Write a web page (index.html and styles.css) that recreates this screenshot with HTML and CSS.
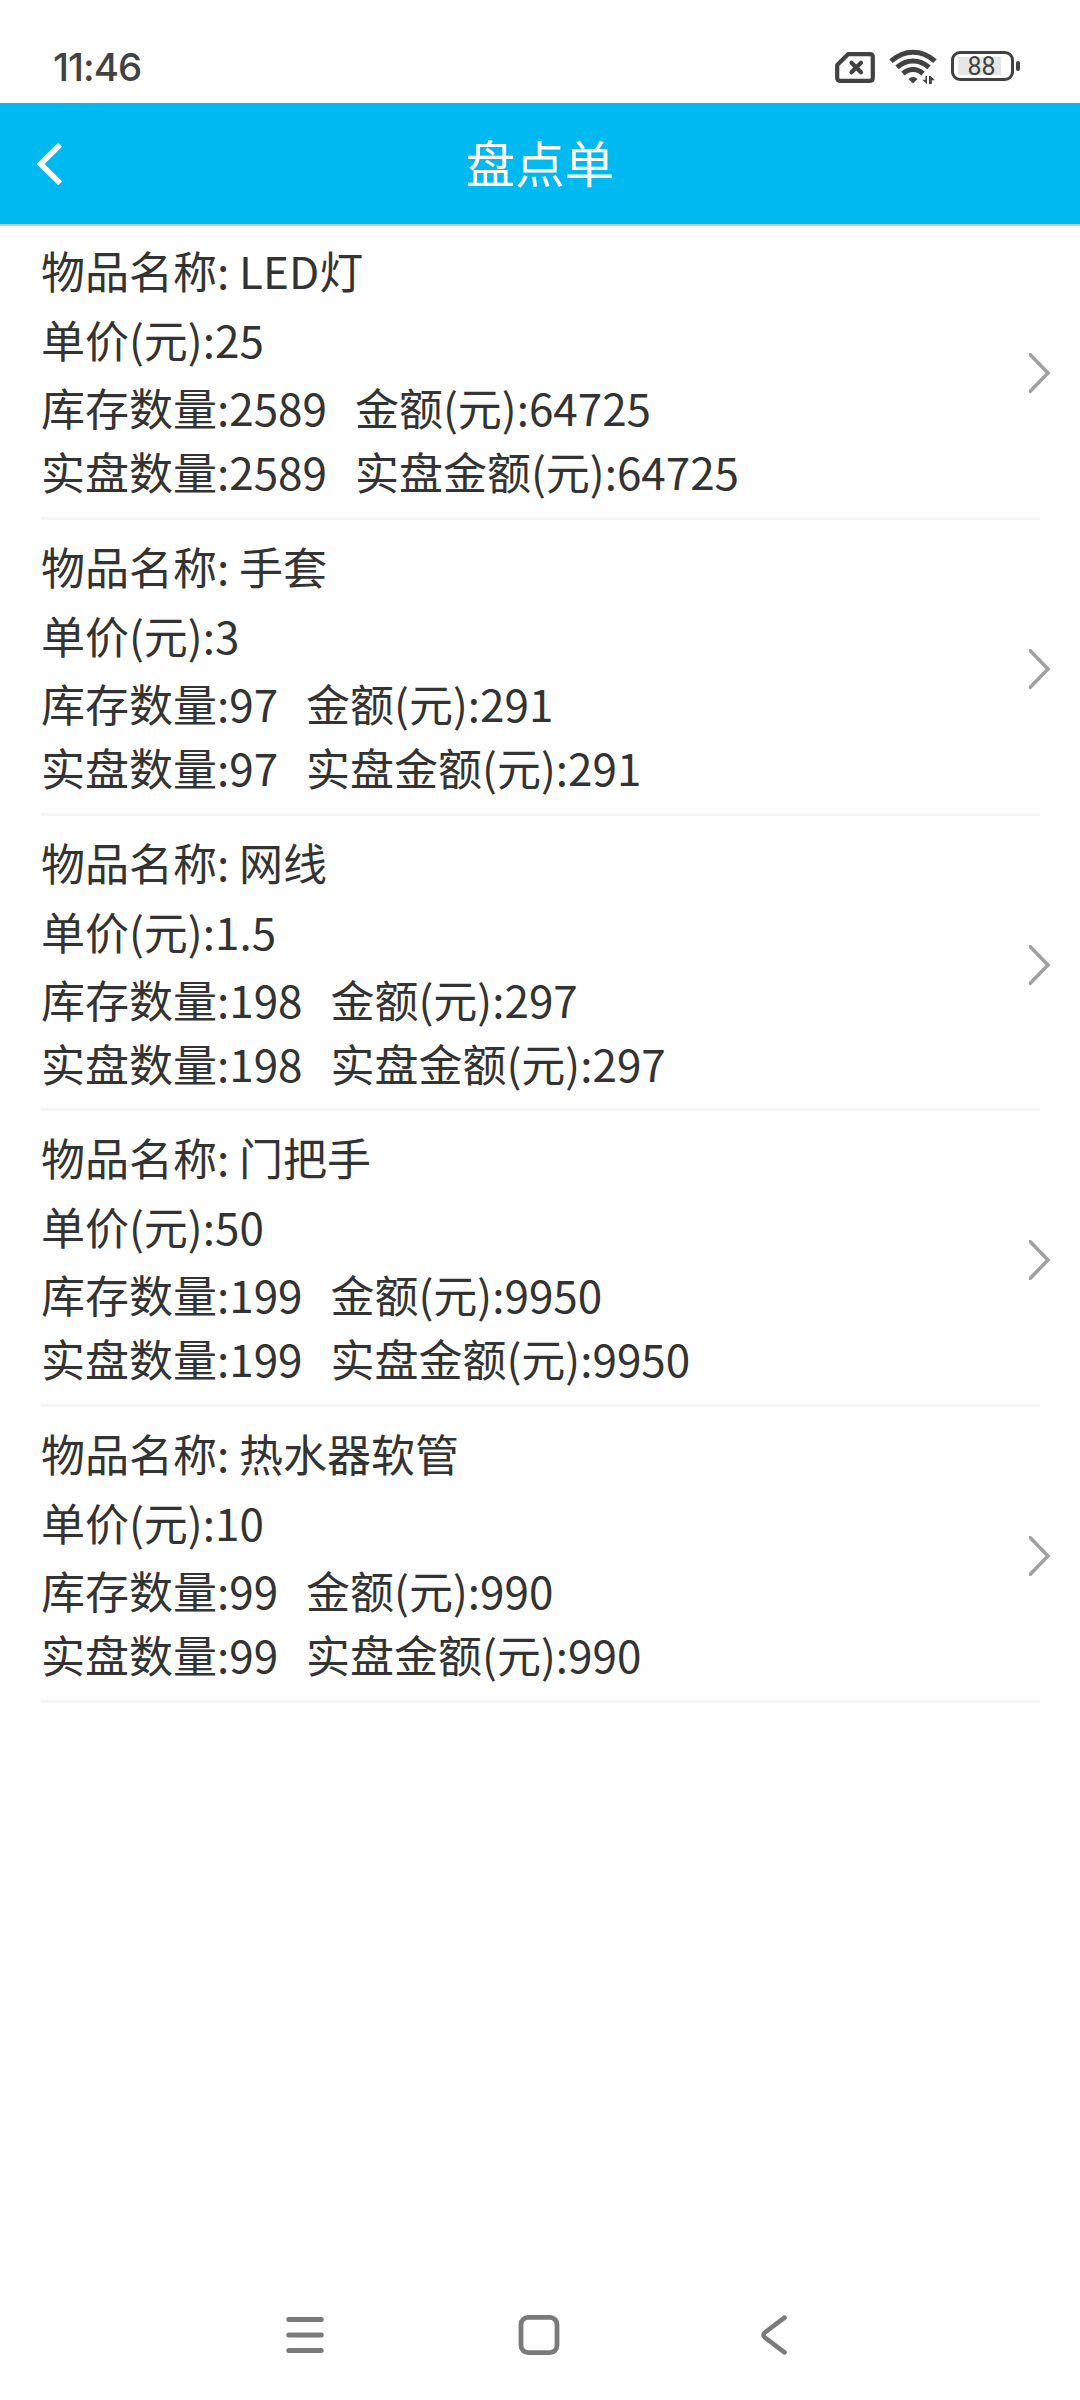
FILE: index.html
```html
<!DOCTYPE html>
<html lang="zh-CN">
<head>
  <meta charset="UTF-8">
  <meta name="viewport" content="width=device-width, initial-scale=1.0">
  <title>盘点单</title>
  <link rel="stylesheet" href="styles.css">
</head>
<body>
  <div class="status-bar">
    <span class="time">11:46</span>
    <div class="status-icons">
      <svg class="icon-sim" width="40" height="32" viewBox="0 0 40 32">
        <path d="M13 2.2H35Q37.8 2.2 37.8 5V26Q37.8 28.8 35 28.8H5Q2.2 28.8 2.2 26V13Z" fill="none" stroke="#424242" stroke-width="4.2" stroke-linejoin="round"/>
        <path d="M16.5 10.8L26 20.3M26 10.8L16.5 20.3" stroke="#424242" stroke-width="4.2" stroke-linecap="round"/>
      </svg>
      <svg class="icon-wifi" width="48" height="36" viewBox="0 0 48 36">
        <g fill="none" stroke="#424242" stroke-width="5">
          <path d="M2 12.2Q12 3.2 24 3.2T46 12.2"/>
          <path d="M8 18.4Q15 12 24 12T40 18.4"/>
          <path d="M14 24.6Q18.5 20.6 24 20.6T34 24.6"/>
        </g>
        <path d="M24 34.5L19.4 30Q24 25.8 28.6 30Z" fill="#424242"/>
        <path d="M38 27V35L33.2 30.8H36.4V27ZM40 35V27H41.6L46 31.2H42.8V35Z" fill="#424242"/>
      </svg>
      <div class="battery">
        <div class="battery-body"><span class="battery-level">88</span></div>
        <span class="battery-cap"></span>
      </div>
    </div>
  </div>

  <header class="header">
    <svg class="back" width="26" height="42" viewBox="0 0 26 42">
      <path d="M23.2 1.8L3.6 21L23.2 40.2" fill="none" stroke="#fff" stroke-width="5.6"/>
    </svg>
    <h1>盘点单</h1>
  </header>

  <main class="list" id="list"></main>

  <nav class="nav-bar">
    <svg width="40" height="40" viewBox="0 0 40 40">
      <path d="M3.8 4.5H36.2M3.8 20H36.2M3.8 35.5H36.2" stroke="#7a7a7a" stroke-width="5" stroke-linecap="round"/>
    </svg>
    <svg width="42" height="40" viewBox="0 0 42 40">
      <rect x="3" y="2.4" width="36" height="35.2" rx="7" fill="none" stroke="#7a7a7a" stroke-width="4.8"/>
    </svg>
    <svg width="28" height="40" viewBox="0 0 28 40">
      <path d="M24.5 2.6L5.2 17.2Q1.8 20 5.2 22.8L24.5 37.4" fill="none" stroke="#7a7a7a" stroke-width="4.6" stroke-linecap="round"/>
    </svg>
  </nav>

  <script>
    const items = [
      { name: 'LED灯', price: '25', count: 2589, amount: 64725 },
      { name: '手套', price: '3', count: 97, amount: 291 },
      { name: '网线', price: '1.5', count: 198, amount: 297 },
      { name: '门把手', price: '50', count: 199, amount: 9950 },
      { name: '热水器软管', price: '10', count: 99, amount: 990 }
    ];

    document.getElementById('list').innerHTML = items.map(item => `
      <div class="item">
        <div class="info">
          <p class="name">物品名称: ${item.name}</p>
          <p class="price">单价(元):${item.price}</p>
          <p class="stock"><span>库存数量:${item.count}</span><span>金额(元):${item.amount}</span></p>
          <p class="actual"><span>实盘数量:${item.count}</span><span>实盘金额(元):${item.amount}</span></p>
        </div>
        <svg class="arrow" width="22" height="40" viewBox="0 0 22 40">
          <path d="M0 0.5L19 20L0 39.5" fill="none" stroke="#a0a0a0" stroke-width="3.6"/>
        </svg>
      </div>`).join('');
  </script>
</body>
</html>
```

FILE: styles.css
```css
* {
  box-sizing: border-box;
}

body {
  display: flex;
  flex-direction: column;
  height: 2400px;
  margin: 0;
  background-color: #fefefe;
  color: #333;
  font-family: "Noto Sans CJK SC", sans-serif;
}

svg {
  display: block;
  flex: none;
}

/* Status bar */
.status-bar {
  display: flex;
  justify-content: space-between;
  height: 103px;
  padding: 30px 60px 0 53px;
}

.time {
  height: 74px;
  line-height: 74px;
  font-family: Inter, sans-serif;
  font-size: 38.5px;
  font-weight: 500;
  letter-spacing: -1px;
  color: #424242;
}

.status-icons {
  display: flex;
  align-items: flex-start;
}

.icon-sim {
  margin-top: 22px;
}

.icon-wifi {
  margin: 19px 14px 0 14px;
}

.battery {
  display: flex;
  align-items: center;
  gap: 2px;
  margin-top: 21px;
}

.battery-body {
  width: 63px;
  height: 30px;
  padding: 3px 4px;
  border: 3px solid #424242;
  border-radius: 9px;
}

.battery-level {
  display: block;
  width: 43px;
  height: 18px;
  padding-left: 4px;
  line-height: 19px;
  background-color: #e6e6e6;
  font-family: Roboto, sans-serif;
  font-size: 25px;
  text-align: center;
  color: #424242;
}

.battery-cap {
  width: 4px;
  height: 10px;
  border-radius: 2px;
  background-color: #424242;
}

/* Header */
.header {
  display: grid;
  grid-template-columns: 90px 1fr 90px;
  align-items: center;
  height: 123px;
  border-bottom: 2px solid #bccbd4;
  background-color: #00b9f1;
}

.back {
  margin-left: 37px;
}

.header h1 {
  margin: 0;
  padding-bottom: 3px;
  font-size: 49.5px;
  font-weight: 400;
  line-height: 118px;
  text-align: center;
  color: #fff;
}

/* Item list */
.list {
  flex: 1;
  margin-top: -2px;
  padding: 0 40px 0 41px;
}

.item {
  display: flex;
  justify-content: space-between;
  height: 295.75px;
  padding-top: 12px;
  border-bottom: 3px solid #f5f5f5;
}

.info p {
  margin: 0;
  font-size: 44px;
  white-space: nowrap;
}

.info .name {
  line-height: 69px;
}

.info .price {
  line-height: 69px;
}

.info .stock,
.info .actual {
  display: flex;
  gap: 28px;
  line-height: 67px;
}

.info .actual {
  line-height: 61px;
}

.arrow {
  margin: 117px -11px 0 0;
}

/* System navigation */
.nav-bar {
  display: flex;
  justify-content: space-between;
  align-items: center;
  height: 130px;
  padding: 0 292px 0 285px;
}

.nav-bar svg:nth-child(2) {
  margin-right: 7px;
}
```
